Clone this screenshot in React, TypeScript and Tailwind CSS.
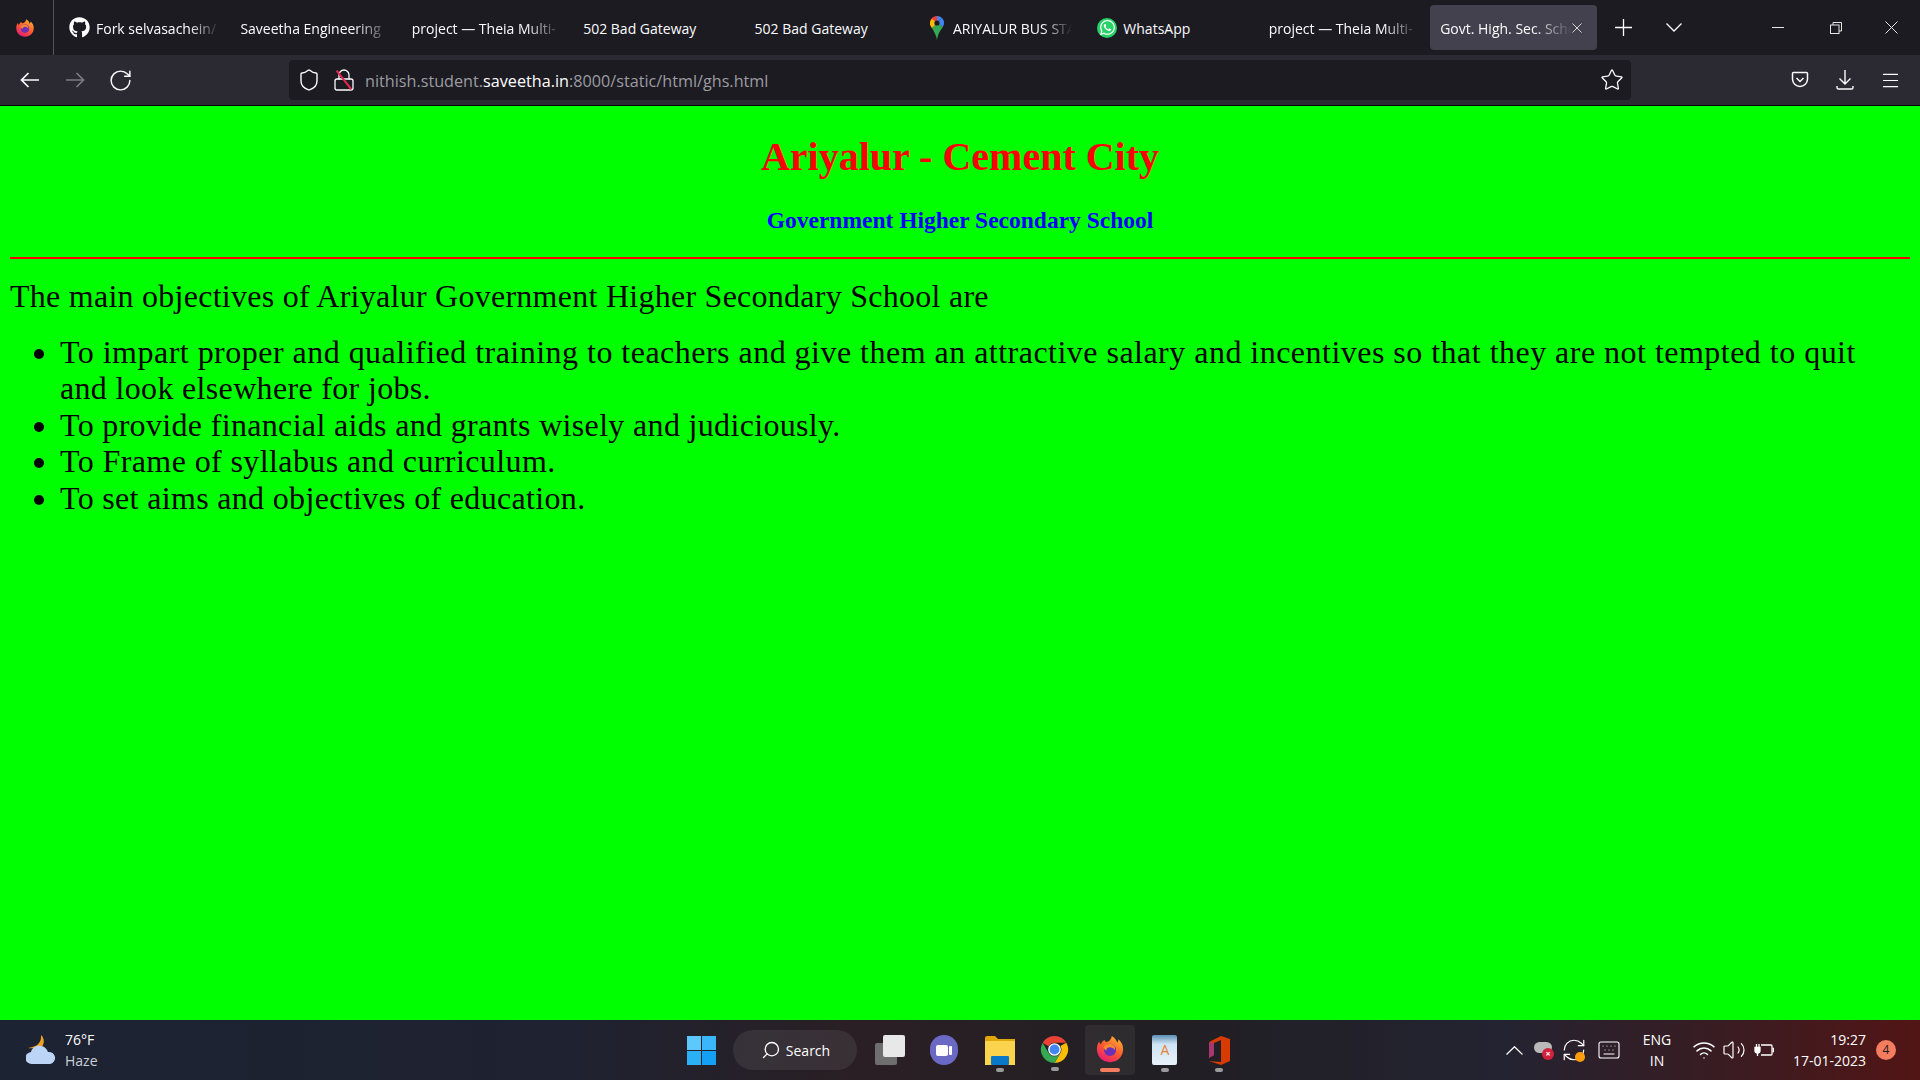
import React from "react";
import { RotateCw, Shield, Lock, Star, Menu, Keyboard, Wifi, Volume2, Search, RefreshCw } from "lucide-react";
import { FaGithub, FaWhatsapp } from "react-icons/fa";

function Firefox({ size = 20 }: { size?: number }) {
  return (
    <svg width={size} height={size} viewBox="0 0 32 32">
      <defs>
        <linearGradient id="ffa" x1="0.8" y1="0" x2="0.2" y2="1"><stop offset="0" stopColor="#ffb52e" /><stop offset="0.5" stopColor="#ff5a2e" /><stop offset="1" stopColor="#e5177b" /></linearGradient>
      </defs>
      <path d="M16 30C8 30 2 24 2 16c0-3 1-6 2.500-8 .2 1.500 1 2.500 1.800 3 .5-2 2-3.500 4-4.500 0 1.200.8 1.800 1.700 2C14 8 17 7 18 2c4 2.500 5 5 5.500 7 1-.8 1.500-2 1.500-3.500 3 2.500 5 6 5 10.500 0 8-6 14-14 14z" fill="url(#ffa)" />
      <circle cx="16" cy="17" r="6.500" fill="#6b2fb8" />
      <path d="M9 14c2-3 6-4 9-3 3 1 4 4 3 6-1-2-3-3-5-3-3 0-4 2-4 3.500C10.500 17 9.500 15.500 9 14z" fill="#ff8a2e" />
    </svg>
  );
}

function Pin() {
  return (
    <svg width="14" height="24" viewBox="0 0 14 24">
      <path d="M7 0C3 0 0 3 0 7c0 2 .8 3.500 2 5l5-5V0z" fill="#ea4335" />
      <path d="M7 0c2 0 3.700.8 5 2L7 7V0z" fill="#4285f4" />
      <path d="M12 2c1.300 1.300 2 3 2 5 0 1.500-.5 2.800-1.200 4L7 7l5-5z" fill="#4285f4" />
      <path d="M2 12l5-5 5.800 4c-1.800 3-4.800 6-5.800 13-.8-5-3-8.500-5-12z" fill="#34a853" />
      <path d="M0 7c0 2 .8 3.500 2 5l5-5-5-4C.8 4 0 5.500 0 7z" fill="#fbbc04" />
      <circle cx="7" cy="7" r="2.600" fill="#1c1b22" />
    </svg>
  );
}

function Cross({ size, color, w = 1 }: { size: number; color: string; w?: number }) {
  return (
    <svg width={size} height={size} viewBox={`0 0 ${size} ${size}`} fill="none" stroke={color} strokeWidth={w} className="shrink-0">
      <path d={`M.5 .5L${size - 0.5} ${size - 0.5}M${size - 0.5} .5L.5 ${size - 0.5}`} />
    </svg>
  );
}

function Tab({ title, icon, fade = true, iconGap = "gap-[6px]", right = "pr-[10px]" }: { title: string; icon?: React.ReactNode; fade?: boolean; iconGap?: string; right?: string }) {
  return (
    <div className={`w-[171.4px] h-[45px] pl-[10px] flex items-center shrink-0 ${iconGap} ${right}`}>
      {icon}
      <span className={`pt-[1px] text-[14px] whitespace-nowrap overflow-hidden flex-1 text-[#fbfbfe] ${fade ? "[mask-image:linear-gradient(to_right,black_75%,transparent_100%)]" : ""}`}>{title}</span>
    </div>
  );
}

function Chrome() {
  return (
    <svg width="29" height="29" viewBox="0 0 32 32">
      <path d="M16 1a15 15 0 0 1 13 7.500H16a7.500 7.500 0 0 0-6.500 3.800L3 8.500A15 15 0 0 1 16 1z" fill="#ea4335" />
      <path d="M29 8.500A15 15 0 0 1 16 31l6.500-11.200A7.500 7.500 0 0 0 22.500 12z" fill="#fbbc04" />
      <path d="M3 8.500l6.500 11.300A7.500 7.500 0 0 0 22.500 19.800L16 31A15 15 0 0 1 3 8.500z" fill="#34a853" />
      <circle cx="16" cy="16" r="7" fill="#fff" />
      <circle cx="16" cy="16" r="5.500" fill="#4285f4" />
    </svg>
  );
}

function Dot({ active }: { active?: boolean }) {
  return <div className={active ? "w-[20px] h-[4px] rounded-full bg-[#f47c5f] mt-[4px]" : "w-[8px] h-[4px] rounded-full bg-[#9a9a9a] mt-[3px]"} />;
}

function Arrow({ flip, color, cls }: { flip?: boolean; color: string; cls: string }) {
  return (
    <svg width="19" height="16" viewBox="0 0 19 16" fill="none" stroke={color} strokeWidth="1.700" className={`shrink-0 ${cls} ${flip ? "-scale-x-100" : ""}`}>
      <path d="M19 8H1.500M8.500 1L1.500 8l7 7" />
    </svg>
  );
}

export default function App() {
  return (
    <div className="w-[1920px] h-[1080px] overflow-hidden flex flex-col bg-[#00ff00] font-['Open_Sans',sans-serif]">
      {/* tab bar */}
      <div className="h-[55px] shrink-0 bg-[#1c1b22] flex items-center text-white">
        <div className="w-[54px] h-[55px] border-r border-[#55545c] flex items-center justify-center pr-[4px] shrink-0"><Firefox size={20} /></div>
        <div className="flex items-center ml-[5px]">
          <Tab title="Fork selvasachein/" icon={<FaGithub size={21} className="shrink-0 text-white" />} />
          <Tab title="Saveetha Engineering" />
          <Tab title="project — Theia Multi-" />
          <Tab title="502 Bad Gateway" fade={false} />
          <Tab title="502 Bad Gateway" fade={false} />
          <Tab title="ARIYALUR BUS STAND" right="pr-[15px]" icon={<span className="ml-[4px] mr-[3px] shrink-0 flex"><Pin /></span>} />
          <Tab title="WhatsApp" fade={false} icon={<span className="w-[20px] h-[20px] rounded-full bg-[#25d366] flex items-center justify-center shrink-0"><FaWhatsapp size={17} className="text-white" /></span>} />
          <Tab title="project — Theia Multi-" />
          <div className="w-[167px] h-[45px] rounded-[4px] bg-[#42414d] flex items-center pl-[10px] pr-[15px] shrink-0">
            <span className="pt-[1px] text-[14px] whitespace-nowrap overflow-hidden flex-1 text-[#fbfbfe] [mask-image:linear-gradient(to_right,black_70%,transparent_100%)]">Govt. High. Sec. School</span>
            <Cross size={10} color="#d5d5d8" />
          </div>
        </div>
        <svg width="17" height="17" viewBox="0 0 17 17" stroke="#fbfbfe" strokeWidth="1.300" className="ml-[18px] shrink-0"><path d="M8.500 0v17M0 8.500h17" /></svg>
        <svg width="16" height="9" viewBox="0 0 16 9" fill="none" stroke="#fbfbfe" strokeWidth="1.300" className="ml-[34px] shrink-0"><path d="M.5 .5L8 8l7.500-7.500" /></svg>
        <div className="ml-[90px] w-[12px] h-[1px] bg-[#e5e5e5] shrink-0" />
        <svg width="12" height="12" viewBox="0 0 12 12" fill="none" stroke="#e5e5e5" className="ml-[46px] shrink-0"><rect x="0.500" y="3" width="8.500" height="8.500" /><path d="M3 3V.5h8.500V9H9" /></svg>
        <span className="ml-[43px] flex shrink-0"><Cross size={13} color="#e5e5e5" /></span>
      </div>
      {/* toolbar */}
      <div className="h-[51px] shrink-0 bg-[#2b2a33] border-b border-black flex items-center text-[#fbfbfe]">
        <Arrow color="#fbfbfe" cls="ml-[20px]" />
        <Arrow flip color="#7c7b82" cls="ml-[27px]" />
        <RotateCw size={25} className="ml-[23px] shrink-0" strokeWidth={1.4} />
        <div className="ml-[156px] w-[1342px] h-[40px] rounded-[4px] bg-[#1c1b22] flex items-center shrink-0">
          <Shield size={24} className="ml-[8px] shrink-0" strokeWidth={1.4} />
          <span className="ml-[10.500px] relative flex shrink-0">
            <Lock size={24} strokeWidth={1.3} />
            <span className="absolute left-[11px] top-0 h-[24px] w-[2px] bg-[#e22850] -rotate-[38deg]" />
          </span>
          <span className="ml-[9.500px] pt-[2px] text-[16.200px] whitespace-nowrap text-[#9b9ba0]">nithish.student.<span className="text-white">saveetha.in</span>:8000/static/html/ghs.html</span>
          <Star size={24} className="ml-auto mr-[7px] shrink-0" strokeWidth={1.3} />
        </div>
        <svg width="18" height="18" viewBox="0 0 18 18" fill="none" stroke="#fbfbfe" strokeWidth="1.500" className="ml-[160px] shrink-0"><path d="M2.500 1.500h13a1 1 0 0 1 1 1V8a7.500 7.500 0 0 1-15 0V2.500a1 1 0 0 1 1-1z" /><path d="M5.500 7L9 10.500 12.500 7" /></svg>
        <svg width="18" height="20" viewBox="0 0 18 20" fill="none" stroke="#fbfbfe" strokeWidth="1.400" className="ml-[27px] shrink-0"><path d="M9 0v14M3.500 8.500L9 14l5.500-5.500" /><path d="M1 16v1.500a1.500 1.500 0 0 0 1.500 1.500h13a1.500 1.500 0 0 0 1.500-1.500V16" /></svg>
        <Menu size={21} className="ml-[25.500px] shrink-0" strokeWidth={1.4} />
      </div>
      {/* page */}
      <main className="flex-1 min-h-0 px-[10px] font-['Liberation_Serif',serif] text-black">
        <h1 className="mt-[28px] text-center text-[40px] leading-[46px] font-bold text-[#ff0000]">Ariyalur - Cement City</h1>
        <h3 className="mt-[27px] text-center text-[23.500px] leading-[27px] font-bold text-[#0000ff]">Government Higher Secondary School</h3>
        <hr className="mt-[23px] border-0 border-t-[2px] border-[#ff0000]" />
        <p className="mt-[19px] text-[32px] leading-[37px] tracking-[0.26px]">The main objectives of Ariyalur Government Higher Secondary School are</p>
        <ul className="mt-[19px] pl-[50px] pr-[20px] list-disc text-[32px] leading-[36.400px] tracking-[0.33px]">
          <li><span className="tracking-[0.48px]">To impart proper and qualified training to teachers and give them an attractive salary and incentives so that they are not tempted to quit</span> and look elsewhere for jobs.</li>
          <li>To provide financial aids and grants wisely and judiciously.</li>
          <li className="tracking-[0.4px]">To Frame of syllabus and curriculum.</li>
          <li>To set aims and objectives of education.</li>
        </ul>
      </main>
      {/* taskbar */}
      <div className="h-[60px] shrink-0 flex items-center text-white bg-[linear-gradient(to_right,#1c2333_0%,#1f2230_30%,#2a1f24_45%,#211f24_62%,#232331_78%,#3a1c22_90%,#521515_100%)]">
        <svg width="30" height="30" viewBox="0 0 30 30" className="ml-[26px] shrink-0">
          <path d="M15 0c3 3 3 7 1 10-3 2-8 4-14 3 5-1 9-2 11-5 2-2 2-5 2-8z" fill="#f0a020" />
          <path d="M16 1c2 3 3 8-1 12l-10 3c5-3 9-4 10-8 1-2 1-5 1-7z" fill="#f0a020" />
          <path d="M6 29a6 6 0 0 1-1-12c1-4 5-7 10-6 3 0 6 3 7 6a6 6 0 0 1 2 12z" fill="#bcd4f5" />
        </svg>
        <div className="ml-[9px] w-[80px] shrink-0 text-[14px] leading-[21px]">
          <div>76°F</div>
          <div className="text-[#cfd0d3]">Haze</div>
        </div>
        <div className="ml-[542px] grid grid-cols-2 gap-[1px] w-[29px] h-[29px] shrink-0">
          <span className="bg-[#5cc8fb]" /><span className="bg-[#3cb6fa]" /><span className="bg-[#2cb0f5]" /><span className="bg-[#14a0f5]" />
        </div>
        <div className="ml-[17px] w-[124px] h-[40px] rounded-full bg-[#ffffff14] flex items-center justify-center gap-[5px] pl-[1px] shrink-0">
          <Search size={20} className="-scale-x-100" strokeWidth={1.6} />
          <span className="text-[14px]">Search</span>
        </div>
        <div className="ml-[18px] w-[30px] h-[30px] relative shrink-0">
          <span className="absolute left-0 bottom-0 w-[22px] h-[22px] rounded-[2px] bg-[#6e6e6e]" />
          <span className="absolute right-0 top-0 w-[22px] h-[22px] rounded-[2px] bg-[#e8e8e8]" />
        </div>
        <div className="ml-[25px] w-[28px] h-[30px] relative shrink-0">
          <span className="absolute inset-0 rounded-full bg-[#6a6ac4] flex items-center justify-center gap-[1px]">
            <span className="w-[12px] h-[11px] rounded-[2px] bg-white" />
            <span className="w-[3px] h-[9px] rounded-[1px] bg-white" />
          </span>
        </div>
        <div className="ml-[27px] w-[30px] flex flex-col items-center shrink-0 mt-[6px]">
          <svg width="30" height="30" viewBox="0 0 30 30"><path d="M0 3a2 2 0 0 1 2-2h8l3 3h17v26H0z" fill="#e0a80c" /><rect y="6" width="30" height="24" fill="#fcd34d" /><rect x="6" y="21" width="18" height="9" rx="1" fill="#0a78c8" /></svg>
          <Dot />
        </div>
        <div className="ml-[25px] w-[29px] flex flex-col items-center shrink-0 mt-[6px]">
          <Chrome />
          <Dot />
        </div>
        <div className="ml-[16px] w-[50px] h-[50px] rounded-[4px] bg-[#ffffff0f] flex flex-col items-center pt-[9px] shrink-0">
          <Firefox size={30} />
          <Dot active />
        </div>
        <div className="ml-[17px] w-[25px] flex flex-col items-center shrink-0 mt-[6px]">
          <div className="w-[25px] h-[30px] rounded-[2px] bg-[linear-gradient(#5b8fb5,#cfe3f2_30%,#e8f2fa)] flex items-start justify-center pl-[1px] text-[14px] leading-[20px] text-[#e8813a] pt-[5px]">A</div>
          <Dot />
        </div>
        <div className="ml-[31px] w-[22px] flex flex-col items-center shrink-0 mt-[6px]">
          <svg width="22" height="30" viewBox="0 0 22 30"><path d="M1 7L13 1l9 3v22l-9 4-12-4 12 1V5L6 8v12l-5 3z" fill="#d83b01" /><path d="M1 7l5 1v12l-5 3z" fill="#a8366f" /></svg>
          <Dot />
        </div>
        <svg width="17" height="9" viewBox="0 0 17 9" fill="none" stroke="#fff" strokeWidth="1.200" className="ml-[276px] shrink-0"><path d="M.5 8.500L8.500 .7l8 7.800" /></svg>
        <div className="ml-[11px] w-[20px] h-[20px] relative shrink-0">
          <span className="absolute left-0 top-[2px] w-[18px] h-[11px] rounded-full bg-[#b9b9b9]" />
          <span className="absolute right-0 bottom-0 w-[12px] h-[12px] rounded-full bg-[#d3213c] text-[9px] leading-[12px] text-center font-bold">×</span>
        </div>
        <div className="ml-[7px] relative shrink-0 flex">
          <RefreshCw size={26} strokeWidth={1.1} />
          <span className="absolute right-[2px] bottom-[1px] w-[10px] h-[10px] rounded-full bg-[#ff9d0a]" />
        </div>
        <Keyboard size={24} className="ml-[10px] shrink-0" strokeWidth={1.1} />
        <div className="ml-[21px] w-[30px] shrink-0 text-[14px] leading-[21px] text-center">
          <div>ENG</div>
          <div>IN</div>
        </div>
        <Wifi size={24} className="ml-[20px] shrink-0" strokeWidth={1.5} />
        <Volume2 size={24} className="ml-[6px] shrink-0" strokeWidth={1.2} />
        <svg width="20" height="16" viewBox="0 0 20 16" fill="none" stroke="#fff" strokeWidth="1.300" className="ml-[8px] shrink-0"><path d="M7 3h10a1 1 0 0 1 1 1v8a1 1 0 0 1-1 1H7" /><path d="M18.500 6.500h1v3h-1" /><path d="M1 5.500h5v3a2.500 2.500 0 0 1-5 0z" fill="#fff" /><path d="M3.500 11v3M2.500 2v3M5 2v3" /></svg>
        <div className="ml-[18px] w-[74px] shrink-0 text-[14px] leading-[21px] text-right whitespace-nowrap">
          <div>19:27</div>
          <div>17-01-2023</div>
        </div>
        <div className="ml-[10px] w-[20px] h-[20px] rounded-full bg-[#f47c5f] text-[#1c1b22] text-[12px] leading-[20px] text-center shrink-0">4</div>
      </div>
    </div>
  );
}
